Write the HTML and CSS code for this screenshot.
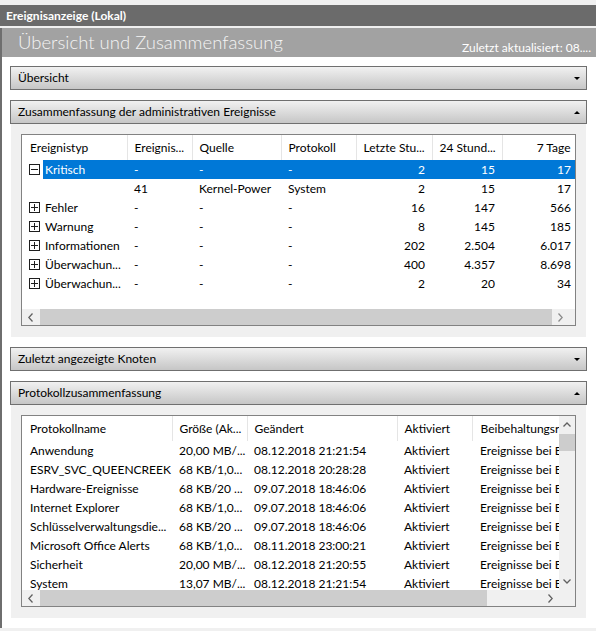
FILE: index.html
```html
<!DOCTYPE html>
<html>
<head>
    <meta charset="utf-8">
    <title>Ereignisanzeige (Lokal)</title>
    <link rel="stylesheet" href="styles.css">
</head>
<body>
    <div class="titlebar">Ereignisanzeige (Lokal)</div>
    <div class="main">
        <div class="banner">
            <h1>Übersicht und Zusammenfassung</h1>
            <span class="updated">Zuletzt aktualisiert: 08....</span>
        </div>

        <div class="panels">
            <div class="panel">
                <div class="panel-head">Übersicht <span class="caret down"></span></div>
            </div>

            <div class="panel">
                <div class="panel-head">Zusammenfassung der administrativen Ereignisse <span class="caret up"></span></div>
                <div class="panel-body">
                    <div class="listbox">
                        <div class="list-main">
                            <div class="list-view">
                                <table class="grid events">
                                    <colgroup>
                                        <col style="width:105px"><col style="width:65px"><col style="width:89px"><col style="width:75px">
                                        <col style="width:76px"><col style="width:70px"><col style="width:73px">
                                    </colgroup>
                                    <thead>
                                        <tr>
                                            <th class="first">Ereignistyp</th>
                                            <th>Ereignis...</th>
                                            <th>Quelle</th>
                                            <th>Protokoll</th>
                                            <th class="num">Letzte Stu...</th>
                                            <th class="num">24 Stund...</th>
                                            <th class="num last">7 Tage</th>
                                        </tr>
                                    </thead>
                                    <tbody>
                                        <tr class="selected">
                                            <td class="tree"><div class="node"><span class="exp open"></span><span class="lbl">Kritisch</span></div></td>
                                            <td>-</td><td>-</td><td>-</td>
                                            <td class="num">2</td><td class="num">15</td><td class="num last">17</td>
                                        </tr>
                                        <tr>
                                            <td class="tree"></td>
                                            <td>41</td><td>Kernel-Power</td><td>System</td>
                                            <td class="num">2</td><td class="num">15</td><td class="num last">17</td>
                                        </tr>
                                        <tr>
                                            <td class="tree"><div class="node"><span class="exp"></span><span class="lbl">Fehler</span></div></td>
                                            <td>-</td><td>-</td><td>-</td>
                                            <td class="num">16</td><td class="num">147</td><td class="num last">566</td>
                                        </tr>
                                        <tr>
                                            <td class="tree"><div class="node"><span class="exp"></span><span class="lbl">Warnung</span></div></td>
                                            <td>-</td><td>-</td><td>-</td>
                                            <td class="num">8</td><td class="num">145</td><td class="num last">185</td>
                                        </tr>
                                        <tr>
                                            <td class="tree"><div class="node"><span class="exp"></span><span class="lbl">Informationen</span></div></td>
                                            <td>-</td><td>-</td><td>-</td>
                                            <td class="num">202</td><td class="num">2.504</td><td class="num last">6.017</td>
                                        </tr>
                                        <tr>
                                            <td class="tree"><div class="node"><span class="exp"></span><span class="lbl">Überwachun...</span></div></td>
                                            <td>-</td><td>-</td><td>-</td>
                                            <td class="num">400</td><td class="num">4.357</td><td class="num last">8.698</td>
                                        </tr>
                                        <tr>
                                            <td class="tree"><div class="node"><span class="exp"></span><span class="lbl">Überwachun...</span></div></td>
                                            <td>-</td><td>-</td><td>-</td>
                                            <td class="num">2</td><td class="num">20</td><td class="num last">34</td>
                                        </tr>
                                    </tbody>
                                </table>
                            </div>
                        </div>
                        <div class="hscroll short">
                            <span class="sb-btn"><svg width="5" height="9" viewBox="0 0 5 9"><polyline points="4.5,0.5 0.8,4.5 4.5,8.5" /></svg></span>
                            <span class="sb-track"><span class="sb-thumb"></span></span>
                            <span class="sb-btn dim"><svg width="5" height="9" viewBox="0 0 5 9"><polyline points="0.5,0.5 4.2,4.5 0.5,8.5" /></svg></span>
                        </div>
                    </div>
                </div>
            </div>

            <div class="panel gap">
                <div class="panel-head">Zuletzt angezeigte Knoten <span class="caret down"></span></div>
            </div>

            <div class="panel">
                <div class="panel-head">Protokollzusammenfassung <span class="caret up"></span></div>
                <div class="panel-body">
                    <div class="listbox">
                        <div class="list-main">
                            <div class="list-view">
                                <table class="grid logs">
                                    <colgroup>
                                        <col style="width:150px"><col style="width:75px"><col style="width:150px"><col style="width:75px"><col style="width:220px">
                                    </colgroup>
                                    <thead>
                                        <tr>
                                            <th class="first">Protokollname</th>
                                            <th>Größe (Ak...</th>
                                            <th>Geändert</th>
                                            <th>Aktiviert</th>
                                            <th class="wide">Beibehaltungsrichtlinie</th>
                                        </tr>
                                    </thead>
                                    <tbody>
                                        <tr><td class="first">Anwendung</td><td>20,00 MB/...</td><td>08.12.2018 21:21:54</td><td>Aktiviert</td><td class="wide">Ereignisse bei Bedarf überschreiben</td></tr>
                                        <tr><td class="first">ESRV_SVC_QUEENCREEK</td><td>68 KB/1,0...</td><td>08.12.2018 20:28:28</td><td>Aktiviert</td><td class="wide">Ereignisse bei Bedarf überschreiben</td></tr>
                                        <tr><td class="first">Hardware-Ereignisse</td><td>68 KB/20 ...</td><td>09.07.2018 18:46:06</td><td>Aktiviert</td><td class="wide">Ereignisse bei Bedarf überschreiben</td></tr>
                                        <tr><td class="first">Internet Explorer</td><td>68 KB/1,0...</td><td>09.07.2018 18:46:06</td><td>Aktiviert</td><td class="wide">Ereignisse bei Bedarf überschreiben</td></tr>
                                        <tr><td class="first">Schlüsselverwaltungsdie...</td><td>68 KB/20 ...</td><td>09.07.2018 18:46:06</td><td>Aktiviert</td><td class="wide">Ereignisse bei Bedarf überschreiben</td></tr>
                                        <tr><td class="first">Microsoft Office Alerts</td><td>68 KB/1,0...</td><td>08.11.2018 23:00:21</td><td>Aktiviert</td><td class="wide">Ereignisse bei Bedarf überschreiben</td></tr>
                                        <tr><td class="first">Sicherheit</td><td>20,00 MB/...</td><td>08.12.2018 21:20:55</td><td>Aktiviert</td><td class="wide">Ereignisse bei Bedarf überschreiben</td></tr>
                                        <tr><td class="first">System</td><td>13,07 MB/...</td><td>08.12.2018 21:21:54</td><td>Aktiviert</td><td class="wide">Ereignisse bei Bedarf überschreiben</td></tr>
                                    </tbody>
                                </table>
                            </div>
                            <div class="vscroll">
                                <span class="sb-btn"><svg width="8" height="5" viewBox="0 0 8 5"><polyline points="0.5,4.5 4,1 7.5,4.5" /></svg></span>
                                <span class="sb-track"><span class="sb-thumb"></span></span>
                                <span class="sb-btn"><svg width="8" height="5" viewBox="0 0 8 5"><polyline points="0.5,0.5 4,4 7.5,0.5" /></svg></span>
                            </div>
                        </div>
                        <div class="hscroll">
                            <span class="sb-btn"><svg width="5" height="9" viewBox="0 0 5 9"><polyline points="4.5,0.5 0.8,4.5 4.5,8.5" /></svg></span>
                            <span class="sb-track"><span class="sb-thumb"></span></span>
                            <span class="sb-btn"><svg width="5" height="9" viewBox="0 0 5 9"><polyline points="0.5,0.5 4.2,4.5 0.5,8.5" /></svg></span>
                            <span class="sb-corner"></span>
                        </div>
                    </div>
                </div>
            </div>
        </div>
    </div>
</body>
</html>
```

FILE: styles.css
```css
* {
    margin: 0;
    padding: 0;
    box-sizing: border-box;
}

body {
    width: 596px;
    height: 631px;
    overflow: hidden;
    padding-top: 5px;
    background: #f0f0f0;
    font-family: Lato, "Open Sans", sans-serif;
    font-size: 12px;
    color: #000;
}

.titlebar {
    height: 21px;
    line-height: 21px;
    padding-left: 6px;
    background: #6b6b6b;
    color: #fff;
    font-weight: bold;
    margin-bottom: 2px;
}

.main {
    height: 600px;
    background: #fff;
    border-left: 2px solid #6e6e6e;
}

.banner {
    height: 29px;
    background: #a2a2a2;
    display: flex;
    justify-content: space-between;
    padding: 0 5px 0 16px;
}

.banner h1 {
    font-size: 18.5px;
    font-weight: 300;
    line-height: 28px;
    color: #f4f4f4;
}

.updated {
    align-self: flex-end;
    color: #fff;
    line-height: 14px;
    padding-bottom: 2px;
}

.panels {
    padding: 9px 9px 0 8px;
}

.panel {
    margin-bottom: 10px;
}

.panel.gap {
    margin-top: 1px;
}

.panel-head {
    height: 24px;
    line-height: 22px;
    padding: 0 7px;
    border: 1px solid #6f6f6f;
    background: linear-gradient(#f1f1f1, #c6c6c6);
    display: flex;
    justify-content: space-between;
    align-items: center;
}

.caret {
    width: 0;
    height: 0;
    border-left: 3px solid transparent;
    border-right: 3px solid transparent;
    margin-right: -1px;
}

.caret.down {
    border-top: 3px solid #000;
}

.caret.up {
    border-bottom: 3px solid #000;
}

.panel-body {
    margin: 0 1px;
    background: #f0f0f0;
    padding: 10px 10px 11px;
}

.listbox {
    height: 192px;
    border: 1px solid #828282;
    background: #fff;
    display: flex;
    flex-direction: column;
    overflow: hidden;
}

.list-main {
    flex: 1;
    display: flex;
    min-height: 0;
}

.list-view {
    flex: 1;
    min-width: 0;
    overflow: hidden;
}

.grid {
    border-collapse: collapse;
    table-layout: fixed;
}

.grid.events {
    width: 553px;
}

.grid.logs {
    width: 670px;
}

.grid th {
    height: 25px;
    font-weight: normal;
    text-align: left;
    padding: 0 7px;
    border-right: 1px solid #e5e5e5;
    white-space: nowrap;
    overflow: hidden;
}

.grid td {
    height: 19px;
    padding: 0 7px;
    white-space: nowrap;
    overflow: hidden;
}

.grid .first {
    padding-left: 8px;
}

.grid .num {
    text-align: right;
}

.grid .last {
    padding-right: 4px;
}

.grid th.wide,
.grid td.wide {
    padding-left: 8px;
    border-right: none;
}

.grid td.tree {
    padding: 0 0 0 7px;
}

.node {
    display: flex;
    align-items: center;
    height: 19px;
}

.exp {
    position: relative;
    width: 11px;
    height: 11px;
    border: 1px solid #1e1e1e;
    margin-right: 3px;
    flex: none;
}

.exp::before,
.exp::after {
    content: "";
    position: absolute;
    background: #1e1e1e;
}

.exp::before {
    left: 1px;
    top: 4px;
    width: 7px;
    height: 1px;
}

.exp::after {
    left: 4px;
    top: 1px;
    width: 1px;
    height: 7px;
}

.exp.open::after {
    display: none;
}

.lbl {
    flex: 1;
    height: 19px;
    line-height: 19px;
    padding-left: 2px;
}

.selected td {
    background: #0078d7;
    color: #fff;
}

.selected td.tree {
    background: #fff;
}

.selected .lbl {
    background: #0078d7;
}

/* scrollbars */
.hscroll {
    height: 16px;
    display: flex;
    background: #f0f0f0;
}

.hscroll.short {
    padding-right: 6px;
}

.sb-btn {
    width: 17px;
    flex: none;
    display: flex;
    align-items: center;
    justify-content: center;
}

.sb-btn svg {
    fill: none;
    stroke: #606060;
    stroke-width: 1.3;
}

.sb-btn.dim svg {
    stroke: #8a8a8a;
}

.sb-track {
    flex: 1;
    display: flex;
    padding: 0 0 0 1px;
}

.hscroll .sb-thumb {
    background: #cdcdcd;
    height: 16px;
    flex: 1;
}

.hscroll:not(.short) .sb-track {
    padding-right: 55px;
}

.sb-corner {
    width: 16px;
    flex: none;
    background: #f0f0f0;
}

.vscroll {
    width: 16px;
    flex: none;
    display: flex;
    flex-direction: column;
    background: #f0f0f0;
}

.vscroll .sb-btn {
    width: 16px;
    height: 17px;
}

.vscroll .sb-track {
    flex-direction: column;
    padding: 1px 0 0;
}

.vscroll .sb-thumb {
    height: 17px;
    background: #cdcdcd;
}
```
